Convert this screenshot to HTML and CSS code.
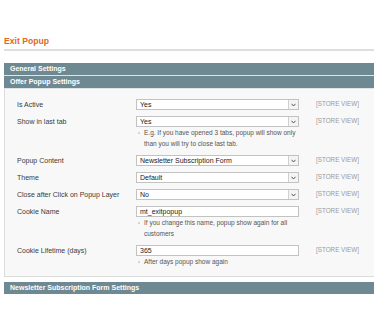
FILE: index.html
```html
<!DOCTYPE html>
<html>
<head>
<meta charset="utf-8">
<link rel="stylesheet" href="styles.css">
</head>
<body>
<div class="page">
  <h3 class="title">Exit Popup</h3>
  <div class="bar">General Settings</div>
  <div class="bar">Offer Popup Settings</div>
  <div class="fieldset">
    <div class="row">
      <div class="label">Is Active</div>
      <div class="value"><div class="select"><span>Yes</span><i class="arrow"><svg width="5" height="4" viewBox="0 0 5 4"><path d="M0.5 0.8 L2.5 3 L4.5 0.8" fill="none" stroke="#555" stroke-width="1"/></svg></i></div></div>
      <div class="scope">[STORE VIEW]</div>
    </div>
    <div class="row">
      <div class="label">Show in last tab</div>
      <div class="value"><div class="select"><span>Yes</span><i class="arrow"><svg width="5" height="4" viewBox="0 0 5 4"><path d="M0.5 0.8 L2.5 3 L4.5 0.8" fill="none" stroke="#555" stroke-width="1"/></svg></i></div>
        <p class="note">E.g. If you have opened 3 tabs, popup will show only than you will try to close last tab.</p></div>
      <div class="scope">[STORE VIEW]</div>
    </div>
    <div class="row">
      <div class="label">Popup Content</div>
      <div class="value"><div class="select"><span>Newsletter Subscription Form</span><i class="arrow"><svg width="5" height="4" viewBox="0 0 5 4"><path d="M0.5 0.8 L2.5 3 L4.5 0.8" fill="none" stroke="#555" stroke-width="1"/></svg></i></div></div>
      <div class="scope">[STORE VIEW]</div>
    </div>
    <div class="row">
      <div class="label">Theme</div>
      <div class="value"><div class="select"><span>Default</span><i class="arrow"><svg width="5" height="4" viewBox="0 0 5 4"><path d="M0.5 0.8 L2.5 3 L4.5 0.8" fill="none" stroke="#555" stroke-width="1"/></svg></i></div></div>
      <div class="scope">[STORE VIEW]</div>
    </div>
    <div class="row">
      <div class="label">Close after Click on Popup Layer</div>
      <div class="value"><div class="select"><span>No</span><i class="arrow"><svg width="5" height="4" viewBox="0 0 5 4"><path d="M0.5 0.8 L2.5 3 L4.5 0.8" fill="none" stroke="#555" stroke-width="1"/></svg></i></div></div>
      <div class="scope">[STORE VIEW]</div>
    </div>
    <div class="row">
      <div class="label">Cookie Name</div>
      <div class="value"><div class="input">mt_exitpopup</div>
        <p class="note">If you change this name, popup show again for all customers</p></div>
      <div class="scope">[STORE VIEW]</div>
    </div>
    <div class="row">
      <div class="label">Cookie Lifetime (days)</div>
      <div class="value"><div class="input">365</div>
        <p class="note">After days popup show again</p></div>
      <div class="scope">[STORE VIEW]</div>
    </div>
  </div>
  <div class="bar bar-last">Newsletter Subscription Form Settings</div>
</div>
</body>
</html>
```
FILE: styles.css
```css
html, body {
  margin: 0;
  padding: 0;
  background: #fff;
  overflow: hidden;
}
body {
  font-family: "Liberation Sans", Arial, sans-serif;
  color: #444;
}
.page {
  width: 440px;
  padding: 36px 0 0 4px;
}
.title {
  margin: 0;
  font-size: 8.6px;
  line-height: 11px;
  font-weight: bold;
  color: #e2671c;
  padding-bottom: 2px;
  border-bottom: 2px solid #dedede;
  margin-bottom: 12px;
}
.bar {
  background: #6f8992;
  color: #fff;
  font-size: 7px;
  font-weight: bold;
  line-height: 12px;
  height: 12px;
  padding-left: 6px;
  border-bottom: 1px solid #dfe5e7;
}
.fieldset {
  background: #f8f8f8;
  border: 1px solid #dcdcdc;
  border-top: 0;
  padding: 10px 0 9px 11px;
  margin-bottom: 5px;
  display: flex;
  flex-direction: column;
  gap: 6px;
}
.row {
  display: grid;
  grid-template-columns: 120px 180px 100px;
  font-size: 7px;
  line-height: 11px;
}
.label {
  color: #3a3a3a;
  padding-left: 1px;
}
.value {
  width: 163px;
}
.select, .input {
  box-sizing: border-box;
  height: 11px;
  border: 1px solid #c2c2c2;
  background: #fff;
  display: flex;
  align-items: center;
  font-size: 7px;
  color: #222;
  padding-left: 3px;
}
.select span {
  flex: 1;
}
.arrow {
  width: 9px;
  height: 9px;
  border-left: 1px solid #d0d0d0;
  background: #f4f4f4;
  display: flex;
  align-items: center;
  justify-content: center;
}
.note {
  margin: 0;
  font-size: 6.5px;
  line-height: 11px;
  color: #555;
  padding-left: 8px;
  position: relative;
  width: 155px;
}
.note::before {
  content: "";
  position: absolute;
  left: 2px;
  top: 4px;
  border-left: 1.5px solid transparent;
  border-right: 1.5px solid transparent;
  border-bottom: 3px solid #c8c8c8;
}
.scope {
  font-size: 6.3px;
  color: #9a9a9a;
  line-height: 10px;
}
.bar-last {
  border-bottom: 1px solid #fff;
  box-shadow: 0 1px 0 #9aabb1;
}
```
